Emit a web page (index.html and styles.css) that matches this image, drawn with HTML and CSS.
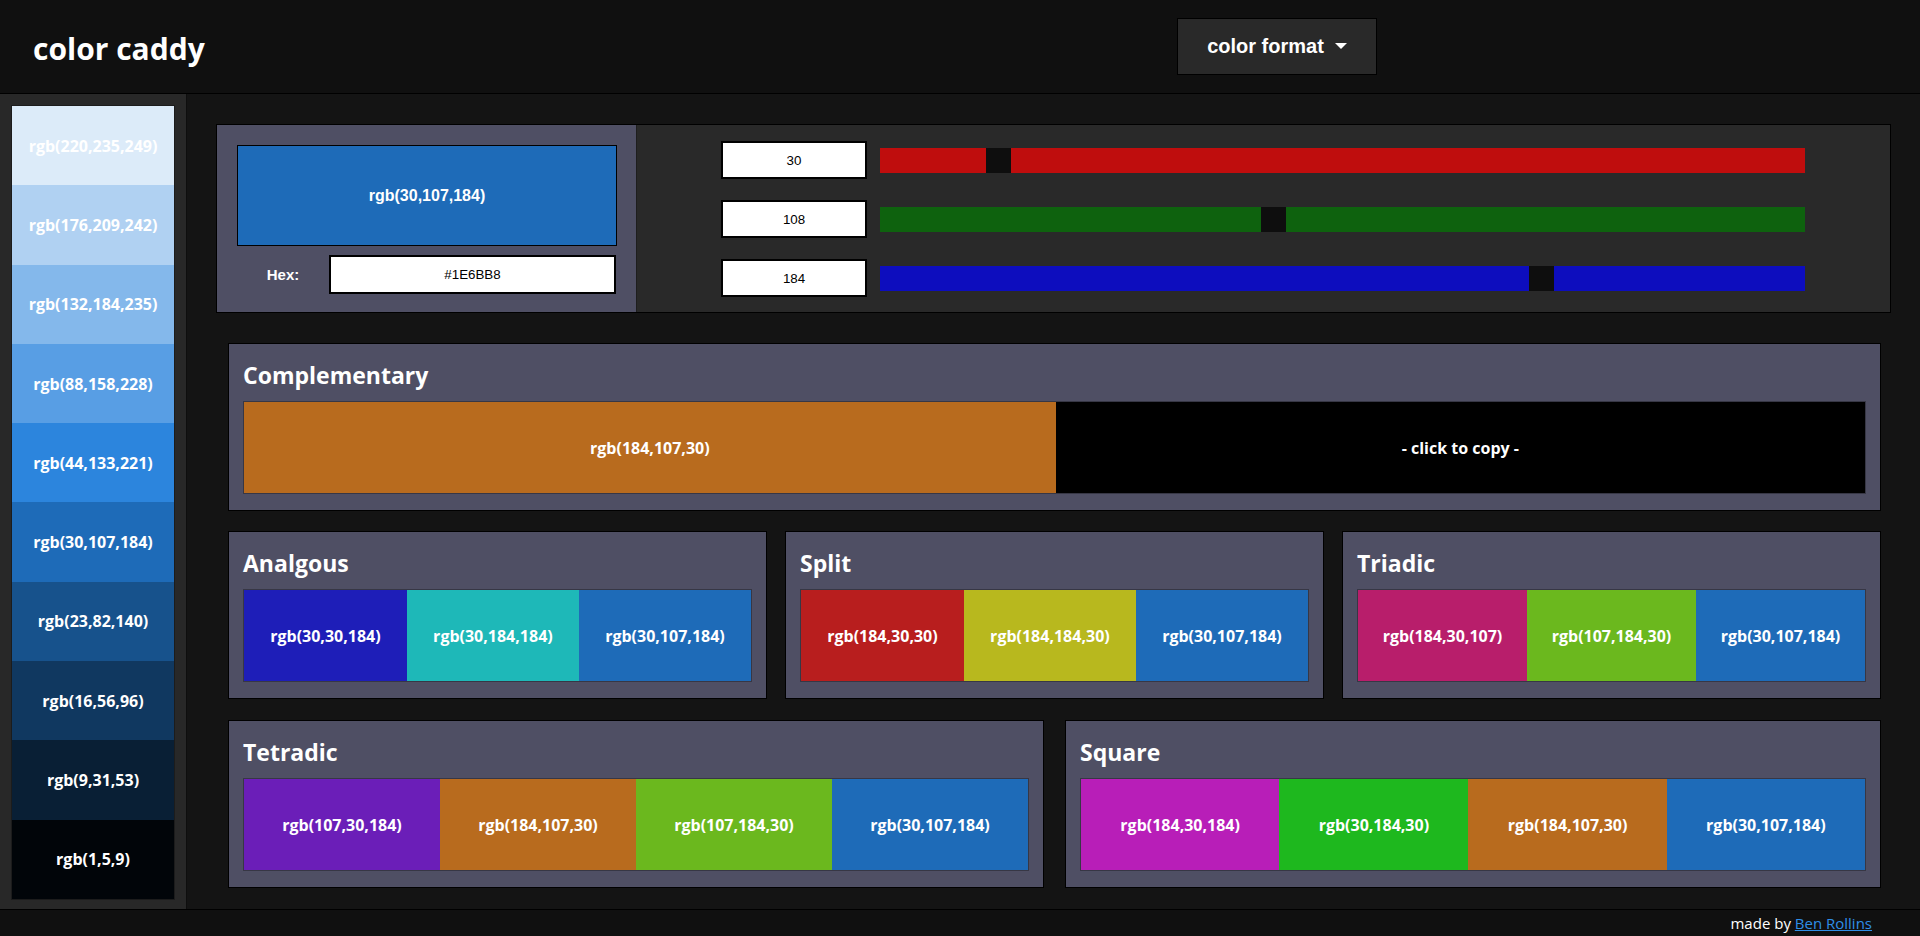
FILE: index.html
```html
<!DOCTYPE html>
<html lang="en">
<head>
<meta charset="utf-8">
<title>color caddy</title>
<link rel="stylesheet" href="styles.css">
</head>
<body>
<header class="topbar">
  <h1 class="brand">color caddy</h1>
  <button class="format-btn">color format<span class="caret"></span></button>
</header>
<div class="layout">
  <aside class="sidebar">
    <div class="shades">
      <div class="shade" style="background:rgb(220,235,249)">rgb(220,235,249)</div>
      <div class="shade" style="background:rgb(176,209,242)">rgb(176,209,242)</div>
      <div class="shade" style="background:rgb(132,184,235)">rgb(132,184,235)</div>
      <div class="shade" style="background:rgb(88,158,228)">rgb(88,158,228)</div>
      <div class="shade" style="background:rgb(44,133,221)">rgb(44,133,221)</div>
      <div class="shade" style="background:rgb(30,107,184)">rgb(30,107,184)</div>
      <div class="shade" style="background:rgb(23,82,140)">rgb(23,82,140)</div>
      <div class="shade" style="background:rgb(16,56,96)">rgb(16,56,96)</div>
      <div class="shade" style="background:rgb(9,31,53)">rgb(9,31,53)</div>
      <div class="shade" style="background:rgb(1,5,9)">rgb(1,5,9)</div>
    </div>
  </aside>
  <main class="content">
    <section class="picker">
      <div class="picker-left">
        <div class="current" style="background:rgb(30,107,184)">rgb(30,107,184)</div>
        <div class="hex-row">
          <span class="hex-label">Hex:</span>
          <div class="hex-input">#1E6BB8</div>
        </div>
      </div>
      <div class="picker-right">
        <div class="channel">
          <div class="num">30</div>
          <div class="track red"><div class="thumb" style="left:106px"></div></div>
        </div>
        <div class="channel">
          <div class="num">108</div>
          <div class="track green"><div class="thumb" style="left:381px"></div></div>
        </div>
        <div class="channel">
          <div class="num">184</div>
          <div class="track blue"><div class="thumb" style="left:649px"></div></div>
        </div>
      </div>
    </section>

    <div class="schemes">
      <section class="panel">
        <h2 class="panel-title">Complementary</h2>
        <div class="swatches">
          <div class="sw" style="background:rgb(184,107,30)">rgb(184,107,30)</div>
          <div class="sw copy">- click to copy -</div>
        </div>
      </section>

      <div class="row three">
        <section class="panel">
          <h2 class="panel-title">Analgous</h2>
          <div class="swatches">
            <div class="sw" style="background:rgb(30,30,184)">rgb(30,30,184)</div>
            <div class="sw" style="background:rgb(30,184,184)">rgb(30,184,184)</div>
            <div class="sw" style="background:rgb(30,107,184)">rgb(30,107,184)</div>
          </div>
        </section>
        <section class="panel">
          <h2 class="panel-title">Split</h2>
          <div class="swatches">
            <div class="sw" style="background:rgb(184,30,30)">rgb(184,30,30)</div>
            <div class="sw" style="background:rgb(184,184,30)">rgb(184,184,30)</div>
            <div class="sw" style="background:rgb(30,107,184)">rgb(30,107,184)</div>
          </div>
        </section>
        <section class="panel">
          <h2 class="panel-title">Triadic</h2>
          <div class="swatches">
            <div class="sw" style="background:rgb(184,30,107)">rgb(184,30,107)</div>
            <div class="sw" style="background:rgb(107,184,30)">rgb(107,184,30)</div>
            <div class="sw" style="background:rgb(30,107,184)">rgb(30,107,184)</div>
          </div>
        </section>
      </div>

      <div class="row two">
        <section class="panel">
          <h2 class="panel-title">Tetradic</h2>
          <div class="swatches">
            <div class="sw" style="background:rgb(107,30,184)">rgb(107,30,184)</div>
            <div class="sw" style="background:rgb(184,107,30)">rgb(184,107,30)</div>
            <div class="sw" style="background:rgb(107,184,30)">rgb(107,184,30)</div>
            <div class="sw" style="background:rgb(30,107,184)">rgb(30,107,184)</div>
          </div>
        </section>
        <section class="panel">
          <h2 class="panel-title">Square</h2>
          <div class="swatches">
            <div class="sw" style="background:rgb(184,30,184)">rgb(184,30,184)</div>
            <div class="sw" style="background:rgb(30,184,30)">rgb(30,184,30)</div>
            <div class="sw" style="background:rgb(184,107,30)">rgb(184,107,30)</div>
            <div class="sw" style="background:rgb(30,107,184)">rgb(30,107,184)</div>
          </div>
        </section>
      </div>
    </div>
  </main>
</div>
<footer class="footer">made by <a href="#">Ben Rollins</a></footer>
</body>
</html>
```

FILE: styles.css
```css
* { box-sizing: border-box; }
html, body { margin: 0; padding: 0; }
body {
  height: 936px;
  overflow: hidden;
  background: #141414;
  color: #fff;
  font-family: "Open Sans", "Noto Sans", sans-serif;
  display: flex;
  flex-direction: column;
}

/* header */
.topbar {
  flex: none;
  height: 94px;
  background: #101010;
  border-bottom: 1px solid #000;
  display: grid;
  grid-template-columns: 1177px 200px 1fr;
  align-items: start;
}
.brand {
  margin: 0;
  padding: 28px 0 0 33px;
  font-size: 30px;
  line-height: 41px;
  font-weight: 700;
  color: #fff;
}
.format-btn {
  margin-top: 18px;
  width: 200px;
  height: 57px;
  background: #292929;
  border: 1px solid #000;
  color: #fff;
  font-family: "Liberation Sans", Arial, sans-serif;
  font-weight: 700;
  font-size: 20px;
  line-height: 55px;
  padding: 0;
  text-align: center;
}
.caret {
  display: inline-block;
  margin-left: 11px;
  vertical-align: 4px;
  width: 0;
  height: 0;
  border-top: 6px solid #fff;
  border-left: 6px solid transparent;
  border-right: 6px solid transparent;
}

/* layout */
.layout {
  flex: 1;
  min-height: 0;
  display: flex;
}
.sidebar {
  flex: none;
  width: 187px;
  background: #282828;
  border-right: 1px solid #0e0e0e;
  padding: 11px 11px 9px 11px;
}
.shades {
  height: 100%;
  display: flex;
  flex-direction: column;
  border: 1px solid #1c1c1c;
}
.shade {
  flex: 1 1 0;
  display: flex;
  align-items: center;
  justify-content: center;
  font-weight: 700;
  font-size: 16px;
  color: #fff;
}

.content {
  flex: 1;
  min-width: 0;
  padding: 30px 29px 0 29px;
}

/* picker */
.picker {
  height: 189px;
  border: 1px solid #000;
  display: grid;
  grid-template-columns: 419px 1fr;
}
.picker-left {
  background: #4f4f64;
  padding: 20px 19px 0 20px;
}
.current {
  height: 101px;
  border: 1px solid #000;
  display: flex;
  align-items: center;
  justify-content: center;
  font-family: "Liberation Sans", Arial, sans-serif;
  font-weight: 700;
  font-size: 16px;
  color: #fff;
}
.hex-row {
  margin-top: 9px;
  display: flex;
  align-items: center;
  height: 39px;
}
.hex-label {
  width: 92px;
  text-align: center;
  font-family: "Liberation Sans", Arial, sans-serif;
  font-weight: 700;
  font-size: 15px;
}
.hex-input, .num {
  background: #fff;
  color: #000;
  border: 2px solid #000;
  display: flex;
  align-items: center;
  justify-content: center;
  font-family: "Liberation Sans", Arial, sans-serif;
  font-size: 13.333px;
}
.hex-input {
  width: 287px;
  height: 39px;
}
.picker-right {
  background: #292929;
  border-left: 1px solid #1e1e1e;
  padding: 16px 0 0 84px;
  display: flex;
  flex-direction: column;
  gap: 21px;
}
.channel {
  display: flex;
  align-items: center;
  gap: 13px;
}
.num {
  width: 146px;
  height: 38px;
}
.track {
  position: relative;
  width: 925px;
  height: 25px;
}
.track.red { background: #bf0d0d; }
.track.green { background: #0e620e; }
.track.blue { background: #0d0dbe; }
.thumb {
  position: absolute;
  top: 0;
  width: 25px;
  height: 25px;
  background: #0e0e0e;
}

/* schemes */
.schemes {
  margin: 30px 10px 0 12px;
}
.row {
  display: flex;
  margin-top: 20px;
}
.row.three { gap: 18px; }
.row.two { gap: 21px; margin-top: 21px; }
.row .panel { flex: 1 1 0; min-width: 0; }
.panel {
  background: #4f4f64;
  border: 1px solid #000;
  padding: 15px 14px 16px 14px;
}
.panel-title {
  margin: 0 0 10px;
  font-size: 23px;
  line-height: 32px;
  font-weight: 700;
  color: #fff;
}
.swatches {
  display: flex;
  height: 93px;
  border: 1px solid rgba(0, 0, 0, 0.3);
}
.sw {
  flex: 1 1 auto;
  display: flex;
  align-items: center;
  justify-content: center;
  font-weight: 700;
  font-size: 16px;
  color: #fff;
  white-space: nowrap;
}
.sw.copy { background: #000; }

/* footer */
.footer {
  flex: none;
  height: 27px;
  background: #101010;
  border-top: 1px solid #000;
  text-align: right;
  padding-right: 48px;
  font-size: 15px;
  line-height: 26px;
  color: #fff;
}
.footer a {
  color: #2f8ee6;
  text-decoration: underline;
}
```
